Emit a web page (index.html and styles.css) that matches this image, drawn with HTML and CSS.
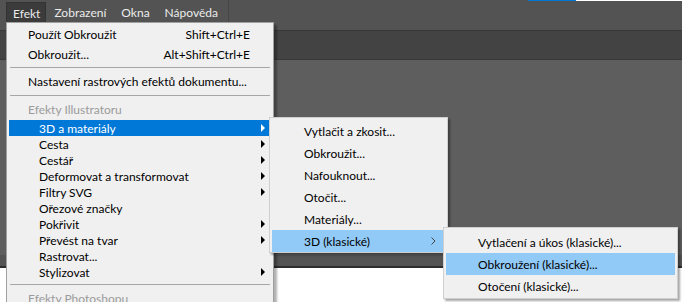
FILE: index.html
```html
<!DOCTYPE html>
<html lang="cs">
<head>
    <meta charset="UTF-8">
    <title>Efekt menu</title>
    <link rel="stylesheet" href="styles.css">
</head>
<body>
    <div class="app">
        <div class="topline"></div>
        <div class="header">
            <div class="menubar">
                <span class="mb-item active">Efekt</span>
                <span class="mb-item">Zobrazení</span>
                <span class="mb-item">Okna</span>
                <span class="mb-item">Nápověda</span>
                <span class="mb-sep"></span>
            </div>
        </div>
        <div class="optionsbar"></div>
        <div class="canvas"></div>
        <div class="tabband"></div>
        <div class="doc"></div>
    </div>

    <!-- Efekt dropdown -->
    <div class="menu main">
        <div class="mi"><span class="label">Použít Obkroužit</span><span class="key">Shift+Ctrl+E</span></div>
        <div class="mi"><span class="label">Obkroužit...</span><span class="key">Alt+Shift+Ctrl+E</span></div>
        <div class="sep first"></div>
        <div class="mi"><span class="label">Nastavení rastrových efektů dokumentu...</span></div>
        <div class="sep"></div>
        <div class="mi head">Efekty Illustratoru</div>
        <div class="mi sm sel"><span class="label">3D a materiály</span><span class="arrow"></span></div>
        <div class="mi sm"><span class="label">Cesta</span><span class="arrow"></span></div>
        <div class="mi sm"><span class="label">Cestář</span><span class="arrow"></span></div>
        <div class="mi sm"><span class="label">Deformovat a transformovat</span><span class="arrow"></span></div>
        <div class="mi sm"><span class="label">Filtry SVG</span><span class="arrow"></span></div>
        <div class="mi sm"><span class="label">Ořezové značky</span></div>
        <div class="mi sm"><span class="label">Pokřivit</span><span class="arrow"></span></div>
        <div class="mi sm"><span class="label">Převést na tvar</span><span class="arrow"></span></div>
        <div class="mi sm"><span class="label">Rastrovat...</span></div>
        <div class="mi sm"><span class="label">Stylizovat</span><span class="arrow"></span></div>
        <div class="sep"></div>
        <div class="mi head">Efekty Photoshopu</div>
    </div>

    <!-- 3D a materiály -->
    <div class="menu sub1">
        <div class="si">Vytlačit a zkosit...</div>
        <div class="si">Obkroužit...</div>
        <div class="si">Nafouknout...</div>
        <div class="si">Otočit...</div>
        <div class="si">Materiály...</div>
        <div class="si sel"><span class="label">3D (klasické)</span>
            <svg class="chev" width="5" height="8" viewBox="0 0 5 8"><polyline points="0.5,0.5 4,4 0.5,7.5" fill="none" stroke="#444" stroke-width="1"/></svg>
        </div>
    </div>

    <!-- 3D (klasické) -->
    <div class="menu sub2">
        <div class="si">Vytlačení a úkos (klasické)...</div>
        <div class="si sel">Obkroužení (klasické)...</div>
        <div class="si">Otočení (klasické)...</div>
    </div>
</body>
</html>
```

FILE: styles.css
```css
* {
    box-sizing: border-box;
}
body {
    margin: 0;
    width: 682px;
    height: 302px;
    overflow: hidden;
    font-family: Lato, "Noto Sans", sans-serif;
    font-size: 12px;
    background-color: #535353;
}
.app {
    display: flex;
    flex-direction: column;
    height: 302px;
}
.topline {
    height: 1px;
    background: linear-gradient(to right, #535353 528px, #0078d7 528px, #0078d7 576px, #ffffff 576px);
}
.header {
    height: 29px;
    background-color: #535353;
}
.menubar {
    display: flex;
    align-items: stretch;
    height: 21px;
    margin-top: 1px;
    padding-left: 6px;
    color: #ececec;
    font-size: 12px;
}
.mb-item {
    display: flex;
    align-items: center;
    padding: 0 7px;
    margin-right: 1px;
}
.mb-item.active {
    background-color: #3b3b3b;
    border: 1px solid #333;
    border-bottom: none;
    padding: 0 5px 0 6px;
}
.mb-sep {
    width: 1px;
    margin-left: 2px;
    margin-top: -2px;
    height: 23px;
    background-color: #464646;
}
.optionsbar {
    height: 30px;
    background-color: #434343;
    border-top: 1px solid #383838;
    border-bottom: 1px solid #383838;
}
.canvas {
    height: 195px;
    background-color: #5e5e5e;
}
.tabband {
    height: 13px;
    background-color: #535353;
    border-bottom: 2px solid #2c2c2c;
}
.doc {
    flex: 1;
    background-color: #ffffff;
}

/* menus */
.menu {
    position: absolute;
    background-color: #f0f0f0;
    color: #000;
    font-size: 12px;
}
.main {
    left: 6px;
    top: 22px;
    width: 268px;
    height: 300px;
    padding-top: 1px;
    border: 1px solid #a0a0a0;
    box-shadow: 3px 3px 2px rgba(0, 0, 0, 0.3);
}
.mi {
    display: flex;
    align-items: center;
    height: 20px;
    margin: 0 2px;
    padding: 0 6px 0 19px;
    white-space: nowrap;
}
.mi.sm {
    height: 16px;
    padding-left: 30px;
}
.mi.head {
    height: 21px;
    color: #9b9b9b;
}
.mi .label {
    flex: 1;
}
.mi .key {
    margin-right: 15px;
}
.mi.sel {
    background-color: #0078d7;
    color: #fff;
}
.arrow {
    width: 0;
    height: 0;
    border-left: 4px solid #000;
    border-top: 4px solid transparent;
    border-bottom: 4px solid transparent;
}
.sel .arrow {
    border-left-color: #fff;
}
.sep {
    height: 1px;
    margin: 4px 3px 3px 3px;
    background-color: #a6a6a6;
}
.sep.first {
    margin-top: 3px;
}

.sub1 {
    left: 269px;
    top: 117px;
    width: 179px;
    height: 136px;
    padding-top: 2px;
    border: 1px solid #cfcfcf;
    box-shadow: 2px 2px 2px rgba(0, 0, 0, 0.35);
}
.sub2 {
    left: 443px;
    top: 227px;
    width: 235px;
    height: 72px;
    padding-top: 3px;
    border: 1px solid #cfcfcf;
    box-shadow: 2px 2px 2px rgba(0, 0, 0, 0.35);
}
.si {
    display: flex;
    align-items: center;
    height: 22px;
    margin: 0 2px;
    padding: 0 9px 0 32px;
    white-space: nowrap;
}
.si .label {
    flex: 1;
}
.si.sel {
    background-color: #91c9f7;
}
.sub1 .si.sel {
    margin-right: 0;
    padding-right: 11px;
}
```
